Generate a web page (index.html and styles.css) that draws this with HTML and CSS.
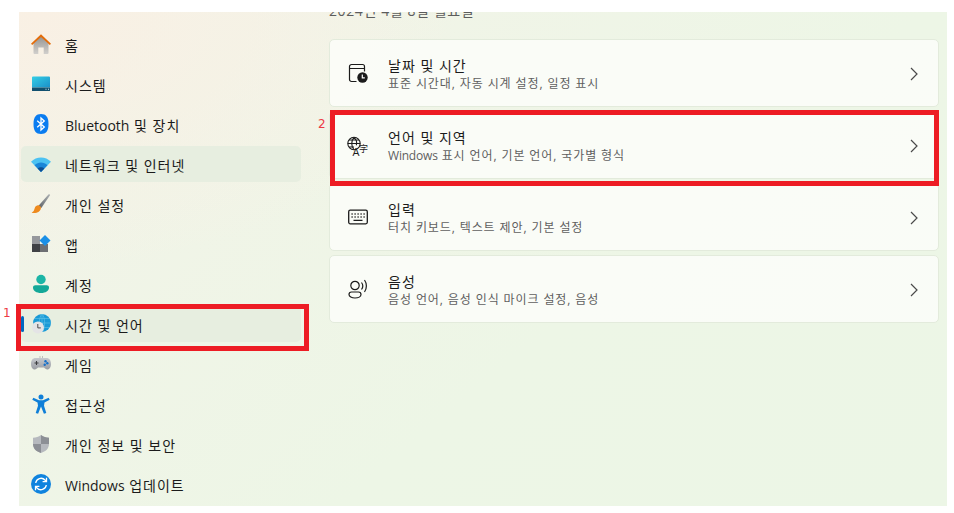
FILE: index.html
```html
<!DOCTYPE html>
<html lang="ko">
<head>
  <meta charset="UTF-8">
  <title>시간 및 언어</title>
  <link rel="stylesheet" href="styles.css">
</head>
<body>
  <div class="window">
    <nav class="sidebar">
      <div class="nav-item">
        <svg class="nav-icon" viewBox="0 0 20 20"><defs><linearGradient id="homeBody" x1="0" y1="0" x2="0" y2="1"><stop offset="0" stop-color="#94928f"/><stop offset="1" stop-color="#d2d0cd"/></linearGradient></defs><path d="M2.500 9 10 2l7.500 7v10a1 1 0 0 1-1 1h-3.800v-6.500H7.300V20H3.500a1 1 0 0 1-1-1z" fill="url(#homeBody)"/><path d="M0 9.800 10 .3l10 9.500-1.200 1.300L10 2.900 1.200 11.100z" fill="#e36c0a"/></svg>
        <span class="nav-label">홈</span>
      </div>
      <div class="nav-item">
        <svg class="nav-icon" viewBox="0 0 20 20"><defs><linearGradient id="sysScreen" x1="0" y1="0" x2="1" y2="1"><stop offset="0" stop-color="#35cfe6"/><stop offset="1" stop-color="#1a8fc9"/></linearGradient></defs><path d="M1 3.500a1 1 0 0 1 1-1h16a1 1 0 0 1 1 1V13.500H1z" fill="url(#sysScreen)"/><path d="M1 13.500h18v2.900a.6.600 0 0 1-.6.600H1.600a.6.600 0 0 1-.6-.6z" fill="#11506f"/><path d="M14.500 14.800h1v1h-1zM17 14.800h1v1h-1z" fill="#cfe9f2"/></svg>
        <span class="nav-label">시스템</span>
      </div>
      <div class="nav-item">
        <svg class="nav-icon" viewBox="0 0 20 20"><path d="M10 0c5 0 7.500 3 7.500 10S15 20 10 20 2.500 17 2.500 10 5 0 10 0z" fill="#0a7cf0"/><path d="M6.200 6.700 13.300 13 10 16V4l3.300 3-7.100 6.300" fill="none" stroke="#fff" stroke-width="1.300"/></svg>
        <span class="nav-label"><span class="lat">Bluetooth</span> 및 장치</span>
      </div>
      <div class="nav-item is-hover">
        <svg class="nav-icon" viewBox="0 0 20 20"><path d="M0 7.800C2.800 4.900 6.200 3.500 10 3.500s7.200 1.400 10 4.300L10 18z" fill="#4cc2f2"/><path d="M3.500 11.300C5.400 9.500 7.600 8.600 10 8.600s4.600.9 6.500 2.700L10 18z" fill="#1a86d8"/><path d="M6.600 14.500c1-.9 2.100-1.300 3.400-1.300s2.400.4 3.400 1.300L10 18z" fill="#0c4f94"/></svg>
        <span class="nav-label">네트워크 및 인터넷</span>
      </div>
      <div class="nav-item">
        <svg class="nav-icon" viewBox="0 0 20 20"><defs><linearGradient id="brushHandle" x1="0" y1="1" x2="1" y2="0"><stop offset="0" stop-color="#5d6266"/><stop offset="1" stop-color="#aeb2b5"/></linearGradient></defs><path d="M7.500 11.800 17.700.3c.7-.5 1.700.2 1.300 1L10.300 14z" fill="url(#brushHandle)"/><path d="M6.800 11.300c1.400-.3 3 .9 3.200 2.500.1 2-1.800 4.500-4.400 4.900-1.700.3-3.700.3-5 0 2.200-1 2.400-2.400 3-4.200.5-1.600 1.500-2.900 3.200-3.200z" fill="#ee8a1e"/></svg>
        <span class="nav-label">개인 설정</span>
      </div>
      <div class="nav-item">
        <svg class="nav-icon" viewBox="0 0 20 20"><path d="M1 2h8v8H1z" fill="#96989c"/><path d="M1 10h8v8H1z" fill="#3f4145"/><path d="M9 10h8v8H9z" fill="#6d6f73"/><path d="m14 1 5.500 5.500L14 12 8.500 6.500z" fill="#1a8fe6"/></svg>
        <span class="nav-label">앱</span>
      </div>
      <div class="nav-item">
        <svg class="nav-icon" viewBox="0 0 20 20"><circle cx="10" cy="5.500" r="4.700" fill="#1cb5a6"/><path d="M2 13.500c0-1.400 1-2.300 2.400-2.300h11.200c1.400 0 2.400.9 2.400 2.300 0 3.300-3.400 5.500-8 5.500s-8-2.200-8-5.500z" fill="#14a898"/></svg>
        <span class="nav-label">계정</span>
      </div>
      <div class="nav-item is-current">
        <svg class="nav-icon" viewBox="0 0 20 20"><circle cx="11" cy="9" r="9" fill="#1a9ad6"/><path d="M11 0v18M2 9h18M4 4.500h14M4 13.500h14M11 0c-3.500 3-3.500 15 0 18M11 0c3.500 3 3.500 15 0 18" fill="none" stroke="#63c5ea" stroke-width=".6"/><circle cx="7" cy="13.500" r="6" fill="#e4e4e6"/><path d="M6.800 10v3.900h3" fill="none" stroke="#4a4a4c" stroke-width="1"/></svg>
        <span class="nav-label">시간 및 언어</span>
      </div>
      <div class="nav-item">
        <svg class="nav-icon" viewBox="0 0 20 20"><defs><linearGradient id="padBody" x1="0" y1="0" x2="0" y2="1"><stop offset="0" stop-color="#c6c9ce"/><stop offset="1" stop-color="#9a9da3"/></linearGradient></defs><path d="M4.500 4h11C18 4 20 6 20 10c0 3-1.500 5.500-3.700 5.500-1.500 0-2.200-1.200-3.300-2H7c-1.100.8-1.800 2-3.300 2C1.500 15.500 0 13 0 10 0 6 2 4 4.500 4z" fill="url(#padBody)"/><path d="M5.500 7v4M3.500 9h4" stroke="#3c3d40" stroke-width="1.100"/><circle cx="14.500" cy="7.300" r="1.200" fill="#1570c9"/><circle cx="16.300" cy="9.200" r="1.200" fill="#1570c9"/><circle cx="13.700" cy="10.700" r="1.200" fill="#1570c9"/><path d="M8.500 2.500h1v1h-1zM11 2.500h1v1h-1z" fill="#8a8c90"/></svg>
        <span class="nav-label">게임</span>
      </div>
      <div class="nav-item">
        <svg class="nav-icon" viewBox="0 0 20 20"><circle cx="10" cy="3" r="2.500" fill="#0f7fd8"/><path d="M2.300 3.800 8 6.300h4l5.700-2.500 1 1.900-5.200 2.800-.5 3.300 2.300 7.200-2.400.7L10 12.500l-2.900 7.200-2.400-.7L7 11.800l-.5-3.300-5.200-2.800z" fill="#0f7fd8"/></svg>
        <span class="nav-label">접근성</span>
      </div>
      <div class="nav-item">
        <svg class="nav-icon" viewBox="0 0 20 20"><path d="M10 1c2.500 1.800 5 2.700 8 2.700V10c0 4.500-3.300 7.500-8 9-4.700-1.500-8-4.500-8-9V3.700C5 3.700 7.500 2.800 10 1z" fill="#b6b9be"/><path d="M10 1c2.500 1.800 5 2.700 8 2.700V10H10zM2 10h8v9c-4.700-1.500-8-4.500-8-9z" fill="#8c8f95"/></svg>
        <span class="nav-label">개인 정보 및 보안</span>
      </div>
      <div class="nav-item">
        <svg class="nav-icon" viewBox="0 0 20 20"><circle cx="10" cy="10" r="10" fill="#0f83de"/><path d="M4.700 9a5.400 5.400 0 0 1 9.300-3l1 1M15.300 11a5.400 5.400 0 0 1-9.300 3l-1-1" fill="none" stroke="#fff" stroke-width="1.300"/><path d="M15.500 3.800v3.900h-3.900M4.500 16.200v-3.900h3.900" fill="none" stroke="#fff" stroke-width="1.300"/></svg>
        <span class="nav-label"><span class="lat">Windows</span> 업데이트</span>
      </div>
    </nav>

    <main class="content">
      <div class="install-date">2024년 4월 8일 월요일</div>

      <div class="card">
        <svg class="card-icon" viewBox="0 0 20 20" fill="none" stroke="#1b1b1b" stroke-width="1.200"><path d="M8.500 18.500H3.500a2 2 0 0 1-2-2V3.500a2 2 0 0 1 2-2h11a2 2 0 0 1 2 2v5M1.500 5.500h15"/><circle cx="14.500" cy="14.500" r="5.200" fill="#1b1b1b" stroke="none"/><path d="M14.300 11.500v3.300h2.500" stroke="#fff"/></svg>
        <div class="card-text">
          <div class="card-title">날짜 및 시간</div>
          <div class="card-desc">표준 시간대, 자동 시계 설정, 일정 표시</div>
        </div>
        <svg class="chevron" viewBox="0 0 8 14"><path d="m1 1 6 6-6 6" fill="none" stroke="#4a4a4a" stroke-width="1.200"/></svg>
      </div>

      <div class="card">
        <svg class="card-icon" viewBox="0 0 20 20" fill="none" stroke="#1b1b1b" stroke-width="1.100"><circle cx="6" cy="8.500" r="6.200"/><path d="M-.2 8.500h12.400M1 5h10M1 12h5M6 2.300c-3 3-3 9.400 0 12.400M6 2.300c3 3 3 6 2.300 8"/><text class="glyph-a" x="4.500" y="20.500" fill="#1b1b1b" stroke="none">A</text><text class="glyph-zi" x="11" y="17" fill="#1b1b1b" stroke="none">字</text></svg>
        <div class="card-text">
          <div class="card-title">언어 및 지역</div>
          <div class="card-desc"><span class="lat">Windows</span> 표시 언어, 기본 언어, 국가별 형식</div>
        </div>
        <svg class="chevron" viewBox="0 0 8 14"><path d="m1 1 6 6-6 6" fill="none" stroke="#4a4a4a" stroke-width="1.200"/></svg>
      </div>

      <div class="card">
        <svg class="card-icon" viewBox="0 0 20 20" fill="none" stroke="#1b1b1b" stroke-width="1.300"><rect x=".7" y="3.200" width="18.600" height="13.600" rx="1.500"/><path d="M3.500 7h1.200M6.500 7h1.200M9.500 7h1.200M12.500 7h1.200M15.500 7h1.200M3.500 10h1.200M6.500 10h1.200M9.500 10h1.200M12.500 10h1.200M15.500 10h1.200M5.500 13.300h9"/></svg>
        <div class="card-text">
          <div class="card-title">입력</div>
          <div class="card-desc">터치 키보드, 텍스트 제안, 기본 설정</div>
        </div>
        <svg class="chevron" viewBox="0 0 8 14"><path d="m1 1 6 6-6 6" fill="none" stroke="#4a4a4a" stroke-width="1.200"/></svg>
      </div>

      <div class="card">
        <svg class="card-icon" viewBox="0 0 20 20" fill="none" stroke="#1b1b1b" stroke-width="1.200"><circle cx="7" cy="6.500" r="4.200"/><path d="M1 15.500c0-1.700 1-2.500 2.500-2.500h7c1.500 0 2.500.8 2.500 2.500 0 2-2.700 3.500-6 3.500s-6-1.500-6-3.500z"/><path d="M13.500 3.500c1.500 2 1.500 5 0 7M16.500 1c2.500 3.500 2.500 8.500 0 12"/></svg>
        <div class="card-text">
          <div class="card-title">음성</div>
          <div class="card-desc">음성 언어, 음성 인식 마이크 설정, 음성</div>
        </div>
        <svg class="chevron" viewBox="0 0 8 14"><path d="m1 1 6 6-6 6" fill="none" stroke="#4a4a4a" stroke-width="1.200"/></svg>
      </div>
    </main>
  </div>

  <!-- annotations drawn over the screenshot -->
  <div class="mark mark-nav"></div>
  <div class="mark mark-card"></div>
  <div class="mark-num num-nav">1</div>
  <div class="mark-num num-card">2</div>
</body>
</html>
```

FILE: styles.css
```css
html, body {
  height: 100%;
  overflow: hidden;
}
body {
  margin: 0;
  background: #fff;
  color: #1b1b1b;
  font-family: "Open Sans", "Noto Sans CJK KR", sans-serif;
  font-size: 14px;
  padding: 12px 7px 7px 19px;
  box-sizing: border-box;
}
.window {
  display: flex;
  height: 494px;
  overflow: hidden;
  background:
    radial-gradient(ellipse 420px 260px at 20px 0, #f9f0e4 0%, rgba(249, 240, 228, 0) 100%),
    linear-gradient(140deg, #f3f3e8 0%, #edf6e6 60%, #ecf6e6 100%);
}
.sidebar {
  width: 280px;
  margin-left: 2px;
  padding-top: 14px;
  flex: none;
}
.nav-item {
  display: flex;
  align-items: center;
  height: 36px;
  margin-bottom: 4px;
  padding-left: 10px;
  border-radius: 5px;
  position: relative;
  font-size: 14px;
  letter-spacing: 1px;
}
.nav-label {
  padding-top: 2px;
}
.lat {
  letter-spacing: 0;
}
.nav-item.is-hover,
.nav-item.is-current {
  background: #e7eee0;
}
.nav-item.is-current::before {
  content: "";
  position: absolute;
  left: 0;
  top: 10px;
  width: 3px;
  height: 16px;
  border-radius: 2px;
  background: #0067c0;
}
.nav-icon {
  width: 20px;
  height: 20px;
  margin-right: 14px;
  flex: none;
}
.content {
  flex: 1;
  margin-left: 28px;
  margin-right: 8px;
}
.install-date {
  font-size: 14px;
  line-height: 20px;
  letter-spacing: 0.6px;
  margin-top: -11px;
  margin-bottom: 18px;
  color: #5c5c5c;
}
.card {
  display: flex;
  align-items: center;
  height: 68px;
  box-sizing: border-box;
  margin-bottom: 4px;
  padding: 0 20px 0 18px;
  background: rgba(253, 254, 251, 0.8);
  border: 1px solid #e3ebdc;
  border-radius: 5px;
}
.card-icon {
  width: 20px;
  height: 20px;
  margin-right: 20px;
  flex: none;
  overflow: visible;
}
.glyph-a {
  font-family: "Open Sans", sans-serif;
  font-size: 11px;
}
.glyph-zi {
  font-family: "Noto Sans CJK KR", sans-serif;
  font-size: 9px;
}
.card-text {
  flex: 1;
  padding-top: 4px;
}
.card-title {
  font-size: 14px;
  line-height: 18px;
  letter-spacing: 1px;
  margin-top: -1px;
  margin-bottom: 1px;
}
.card-desc {
  font-size: 12px;
  line-height: 16px;
  letter-spacing: 0.9px;
  color: #5f5f5f;
}
.card-desc .lat {
  letter-spacing: -0.2px;
}
.chevron {
  width: 8px;
  height: 14px;
  margin-top: 2px;
  flex: none;
}
.mark {
  position: absolute;
  border: 5px solid #ed1c24;
  box-sizing: border-box;
}
.mark-nav {
  left: 16px;
  top: 304px;
  width: 293px;
  height: 47px;
}
.mark-card {
  left: 330px;
  top: 110px;
  width: 609px;
  height: 76px;
}
.mark-num {
  position: absolute;
  font-family: "DejaVu Sans", sans-serif;
  font-size: 12px;
  line-height: 14px;
  color: #ed3a44;
}
.num-nav {
  left: 3px;
  top: 306px;
}
.num-card {
  left: 318px;
  top: 117px;
}
```
